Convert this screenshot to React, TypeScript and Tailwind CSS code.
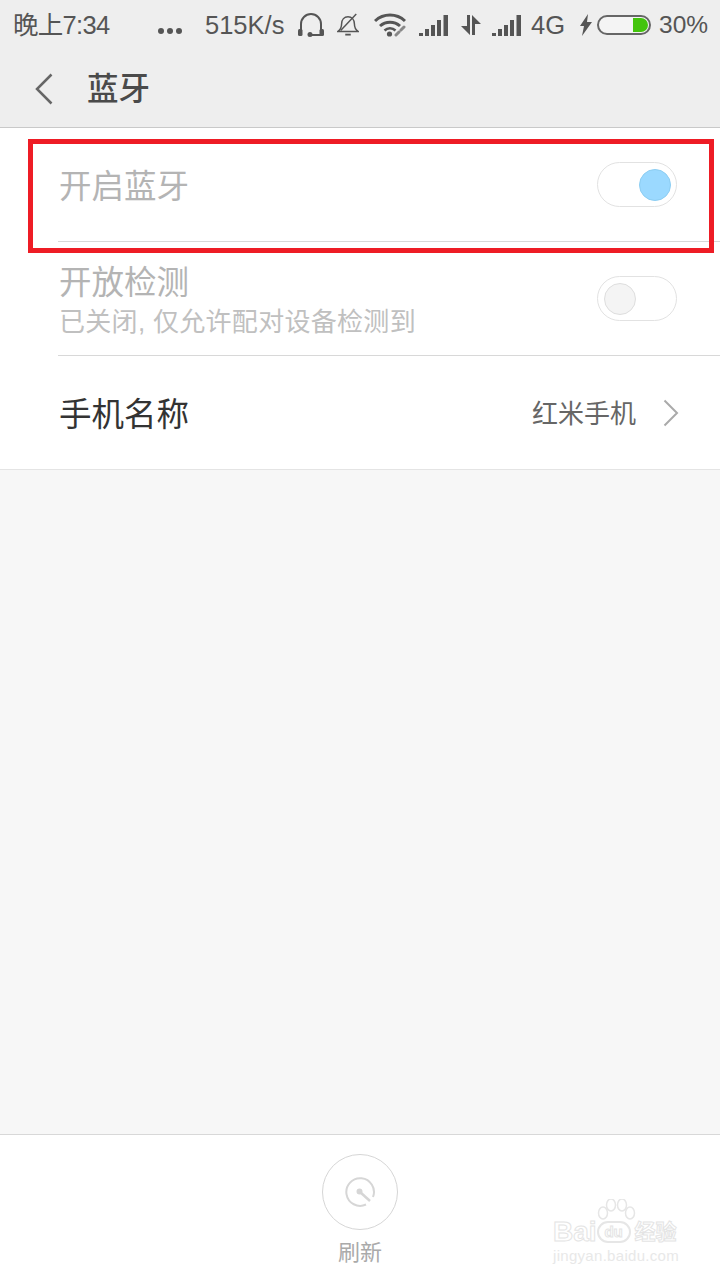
const cjk = "font-['Liberation_Sans','Noto_Sans_CJK_SC',sans-serif]";

function SignalBars() {
  return (
    <svg width="30" height="21" viewBox="0 0 30 21" fill="#555">
      <rect x="0" y="18" width="4" height="3" />
      <rect x="6" y="14" width="4" height="7" />
      <rect x="12" y="10" width="4" height="11" />
      <rect x="18" y="5" width="4" height="16" />
      <rect x="24.500" y="0" width="4.500" height="21" />
    </svg>
  );
}

function StatusBar() {
  return (
    <div className="flex h-[50px] items-center text-[25.5px] text-[#555]">
      <span className="ml-[13px] w-[145px] whitespace-nowrap tracking-[-0.7px]">晚上7:34</span>
      <div className="mt-[12px] flex w-[47px] gap-[3px]">
        <span className="size-[6px] rounded-full bg-[#555]" />
        <span className="size-[6px] rounded-full bg-[#555]" />
        <span className="size-[6px] rounded-full bg-[#555]" />
      </div>
      <span className="w-[93px] whitespace-nowrap">515K/s</span>
      <svg width="26" height="24" viewBox="0 0 26 24" fill="none" className="mr-[13px]">
        <path d="M3 18V11a10 10 0 0 1 20 0v7" stroke="#555" strokeWidth="2" />
        <rect x="0" y="16" width="4.500" height="7" rx="1.500" fill="#555" />
        <rect x="21.500" y="16" width="4.500" height="7" rx="1.500" fill="#555" />
        <path d="M12 22h11" stroke="#555" strokeWidth="2" />
        <circle cx="12" cy="21.500" r="2.500" fill="#555" />
      </svg>
      <svg width="22" height="24" viewBox="0 0 24 26" fill="none" stroke="#555" strokeWidth="1.600" className="mr-[15px]">
        <path d="M1 20c3-2 4-4 4-8 0-5 3-8 7-8s7 3 7 8c0 4 1 6 4 8z" />
        <path d="M9 23.500h6" strokeWidth="2" />
        <path d="M21 1 4 19" />
      </svg>
      <svg width="32" height="24" viewBox="0 0 32 24" fill="none" className="mr-[13px]">
        <path d="M1 8a22 22 0 0 1 30 0" stroke="#555" strokeWidth="3" />
        <path d="M6 13a15 15 0 0 1 20 0" stroke="#555" strokeWidth="3" />
        <path d="M10.500 17.500a8 8 0 0 1 11 0" stroke="#555" strokeWidth="2.500" />
        <circle cx="15.500" cy="21" r="2.600" fill="#555" />
        <path d="m22 22 3-3m2-2 3-3" stroke="#888" strokeWidth="3" strokeLinecap="round" />
      </svg>
      <div className="mr-[11px] flex">
        <SignalBars />
      </div>
      <svg width="22" height="22" viewBox="0 0 22 22" fill="#555" className="mr-[10px]">
        <path d="M7 1h3v20l-9-9h6z" />
        <path d="M12 1l9 9h-6v11h-3z" />
      </svg>
      <SignalBars />
      <span className="ml-[9px] w-[48px] whitespace-nowrap">4G</span>
      <svg width="14" height="22" viewBox="0 0 14 22" fill="#555" className="mr-[4px]">
        <path d="M9 0 1 12h4l-2 10 10-14H8z" />
      </svg>
      <div className="flex h-[20px] w-[54px] justify-end rounded-full border-2 border-[#666] bg-[#f4f4f4] p-px">
        <span className="h-full w-[15px] rounded-r-full bg-[#43c40c]" />
      </div>
      <span className="ml-[8px] whitespace-nowrap text-[24.5px]">30%</span>
    </div>
  );
}

function Toggle({ on }: { on: boolean }) {
  return (
    <div className={`flex h-[45px] w-[80px] items-center rounded-full border border-[#e2e2e2] bg-white ${on ? 'justify-end pr-[5px]' : 'justify-start pl-[6px]'}`}>
      <span className={`size-[32px] rounded-full border ${on ? 'border-[#8ccdf2] bg-[#9bd9ff]' : 'border-[#dedede] bg-[#f4f4f4]'}`} />
    </div>
  );
}

export default function App() {
  return (
    <div className={`relative flex h-[1280px] w-[720px] flex-col overflow-hidden bg-[#f7f7f7] ${cjk}`}>
      <div className="h-[128px] border-b border-[#c9c9c9] bg-[#eeeeee]">
        <StatusBar />
        <div className="flex h-[77px] items-center">
          <svg width="18" height="32" viewBox="0 0 18 32" fill="none" stroke="#666" strokeWidth="2.500" className="ml-[35px]">
            <path d="M16.500 1.500 2 16l14.500 14.500" />
          </svg>
          <h1 className="ml-[34px] mt-[3px] text-[31.5px] font-medium leading-none text-[#4a4a4a]">蓝牙</h1>
        </div>
      </div>

      <div className="border-b border-[#e4e4e4] bg-white">
        <div className="ml-[58px] flex h-[114px] justify-between border-b border-[#d8d8d8] pr-[43px]">
          <span className="ml-[1px] mt-[39px] text-[32.5px] leading-[40px] text-[#b4b4b4]">开启蓝牙</span>
          <div className="mt-[34px]"><Toggle on /></div>
        </div>
        <div className="ml-[58px] flex h-[114px] justify-between border-b border-[#d8d8d8] pr-[43px]">
          <div className="ml-[1px]">
            <div className="mt-[21px] text-[32.5px] leading-[40px] text-[#b4b4b4]">开放检测</div>
            <div className="mt-[3px] whitespace-nowrap text-[26px] leading-[32px] tracking-[0.3px] text-[#c0c0c0]">已关闭, 仅允许配对设备检测到</div>
          </div>
          <div className="mt-[34px]"><Toggle on={false} /></div>
        </div>
        <div className="flex h-[113px] items-center justify-between pl-[59px] pr-[41px]">
          <span className="mt-[4px] text-[32.5px] leading-[40px] text-[#333333]">手机名称</span>
          <div className="flex items-center">
            <span className="mt-[4px] text-[26px] text-[#666666]">红米手机</span>
            <svg width="16" height="28" viewBox="0 0 16 28" fill="none" stroke="#aaaaaa" strokeWidth="2" className="ml-[27px]">
              <path d="M1.500 1.500 14 14 1.500 26.500" />
            </svg>
          </div>
        </div>
      </div>

      <div className="flex-1" />

      <div className="relative flex h-[146px] flex-col items-center border-t border-[#d8d8d8] bg-white">
        <div className="mt-[19px] flex size-[76px] items-center justify-center rounded-full border border-[#d6d6d6]">
          <svg width="30" height="30" viewBox="0 0 30 30" fill="none" stroke="#d6d6d6" strokeWidth="2">
            <path d="M21 27.500A13.800 13.800 0 1 1 28 20" />
            <path d="M15 15 25 24" strokeWidth="2.500" />
            <circle cx="14.500" cy="14.500" r="2" fill="#d6d6d6" />
          </svg>
        </div>
        <span className="mt-[9px] text-[22px] leading-[28px] text-[#aaaaaa]">刷新</span>

        {/* watermark */}
        <div className="absolute left-[553px] top-[84px] w-[130px] text-white">
          <div className="flex items-center whitespace-nowrap text-[28px] font-bold leading-[26px] [-webkit-text-stroke:1px_#e4e4e4]">
            <span>Bai</span>
            <span className="flex h-[22px] w-[34px] items-center justify-center rounded-full border-2 border-[#e6e6e6] text-[15px]">du</span>
            <span className="ml-[4px] text-[21px]">经验</span>
          </div>
          <div className="mt-[3px] whitespace-nowrap text-[15px] leading-[16px] tracking-[0.3px] text-[#e8e8e8]">jingyan.baidu.com</div>
          <svg width="40" height="28" viewBox="0 0 40 28" fill="none" stroke="#e6e6e6" strokeWidth="1.500" className="absolute left-[44px] top-[-20px]">
            <ellipse cx="6" cy="14" rx="4.500" ry="6" />
            <ellipse cx="14" cy="6" rx="4.500" ry="6" />
            <ellipse cx="25" cy="6" rx="4.500" ry="6" />
            <ellipse cx="33" cy="14" rx="4.500" ry="6" />
          </svg>
        </div>
      </div>

      {/* red highlight drawn over the screenshot */}
      <div className="absolute left-[28px] top-[139px] h-[114px] w-[686px] border-[5px] border-[#ee1c25]" />
    </div>
  );
}
